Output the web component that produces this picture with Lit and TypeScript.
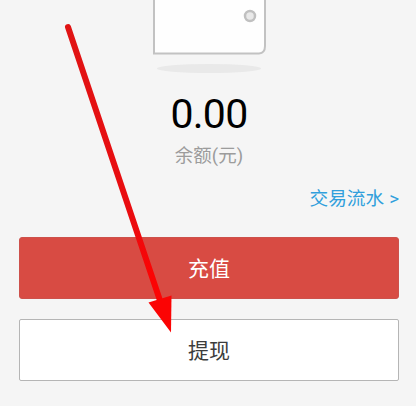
import { LitElement, html, css } from "lit";
import { customElement } from "lit/decorators.js";

@customElement("app-root")
export class AppRoot extends LitElement {
  static styles = css`
    :host {
      display: flex;
      flex-direction: column;
      position: relative;
      box-sizing: border-box;
      width: 416px;
      height: 406px;
      padding: 0 17px 0 19px;
      overflow: hidden;
      background: #f5f5f5;
      font-family: Roboto, "Noto Sans CJK SC", sans-serif;
    }
    .wallet {
      display: block;
      width: 140px;
      height: 85px;
      margin-left: 121px;
      flex: none;
    }
    .amount {
      margin-top: 4px;
      height: 50px;
      line-height: 50px;
      font-size: 41px;
      letter-spacing: -0.7px;
      text-align: center;
      color: #000;
    }
    .label {
      height: 28px;
      margin-top: 3px;
      line-height: 28px;
      font-size: 18.5px;
      text-align: center;
      color: #9c9c9c;
    }
    .link {
      display: flex;
      justify-content: flex-end;
      align-items: center;
      gap: 5px;
      height: 28px;
      margin-top: 15px;
      line-height: 28px;
      font-size: 18.7px;
      color: #309fdc;
    }
    .button {
      box-sizing: border-box;
      height: 62px;
      flex: none;
      border: 0;
      padding: 2px 0 0;
      border-radius: 3px;
      font: inherit;
      font-size: 21px;
      line-height: 58px;
      text-align: center;
    }
    .primary {
      margin-top: 24px;
      background: #d84b43;
      border: 1px solid #cd514b;
      color: #fff;
    }
    .secondary {
      margin-top: 20px;
      background: #fff;
      border: 1px solid #b5b5b5;
      border-radius: 2px;
      color: #3c3c3c;
    }
    .arrow {
      position: absolute;
      left: 0;
      top: 0;
      pointer-events: none;
    }
  `;

  render() {
    return html`
      <svg class="wallet" viewBox="0 0 140 85">
        <path
          d="M14 -4V53.500H119Q125 53 125 46V-4Z"
          fill="#fefefe"
          stroke="#c2c2c2"
          stroke-width="2"
        />
        <circle cx="110" cy="16" r="5" fill="#e9e9e9" stroke="#c0c0c0" stroke-width="2.500" />
        <ellipse cx="69" cy="68.500" rx="52" ry="4.500" fill="#e9e9e9" />
      </svg>
      <div class="amount">0.00</div>
      <div class="label">余额(元)</div>
      <div class="link">交易流水<span>&gt;</span></div>
      <button class="button primary">充值</button>
      <button class="button secondary">提现</button>
      <svg class="arrow" width="416" height="406" viewBox="0 0 416 406">
        <defs>
          <linearGradient id="shaft" gradientUnits="userSpaceOnUse" x1="68" y1="27" x2="160" y2="302">
            <stop offset="0" stop-color="#e01414" />
            <stop offset="0.700" stop-color="#ea0c10" />
            <stop offset="0.900" stop-color="#fb0404" />
          </linearGradient>
        </defs>
        <path d="M68 27L160.500 302" stroke="url(#shaft)" stroke-width="6" stroke-linecap="round" />
        <path d="M171 332.500L148.500 302.500L171.500 295.500Z" fill="#fb0404" />
      </svg>
    `;
  }
}
